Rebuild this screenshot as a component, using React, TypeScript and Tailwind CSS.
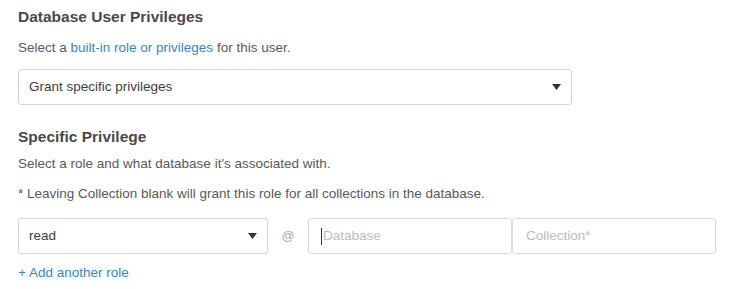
function Caret() {
  return (
    <svg width="9" height="6" viewBox="0 0 9 6" className="shrink-0">
      <path d="M0 0h9L4.5 6z" fill="#333" />
    </svg>
  );
}

function SelectBox({ value, width }: { value: string; width: string }) {
  return (
    <div
      className={`${width} h-[36px] flex items-center justify-between border border-[#d4d4d4] rounded-[3px] bg-white pl-[10px] pr-[10px] text-[13.5px] text-[#3d3d3d]`}
    >
      <span>{value}</span>
      <Caret />
    </div>
  );
}

export default function App() {
  return (
    <div
      className="w-[750px] h-[289px] bg-white pl-[18px] pt-[7px]"
      style={{ fontFamily: '"Liberation Sans", Arial, sans-serif' }}
    >
      <h2 className="text-[15.5px] leading-[20px] font-bold text-[#494949]">
        Database User Privileges
      </h2>
      <p className="mt-[12px] text-[13.5px] leading-[18px] text-[#595959]">
        Select a{' '}
        <a className="text-[#3a86b7] cursor-pointer">built-in role or privileges</a>{' '}
        for this user.
      </p>
      <div className="mt-[12px]">
        <SelectBox value="Grant specific privileges" width="w-[554px]" />
      </div>

      <h2 className="mt-[22px] text-[15.5px] leading-[20px] font-bold text-[#494949]">
        Specific Privilege
      </h2>
      <p className="mt-[8px] text-[13.5px] leading-[18px] text-[#595959]">
        Select a role and what database it's associated with.
      </p>
      <p className="mt-[12px] text-[13.5px] leading-[18px] text-[#595959]">
        * Leaving Collection blank will grant this role for all collections in the database.
      </p>

      <div className="mt-[15px] flex items-center">
        <SelectBox value="read" width="w-[250px]" />
        <span className="w-[40px] text-center text-[13px] text-[#aaaaaa]">@</span>
        <div className="w-[204px] h-[36px] flex items-center border border-[#dcdcdc] rounded-[3px] pl-[12px] text-[13.5px] text-[#bdbdbd]">
          <span className="w-px h-[17px] bg-[#333] mr-[1px]" />
          Database
        </div>
        <div className="w-[204px] h-[36px] flex items-center border border-[#dcdcdc] rounded-[3px] pl-[13px] text-[13.5px] text-[#bdbdbd]">
          Collection*
        </div>
      </div>

      <a className="block mt-[10px] text-[13.5px] leading-[18px] text-[#3a86b7] cursor-pointer">
        + Add another role
      </a>
    </div>
  );
}
